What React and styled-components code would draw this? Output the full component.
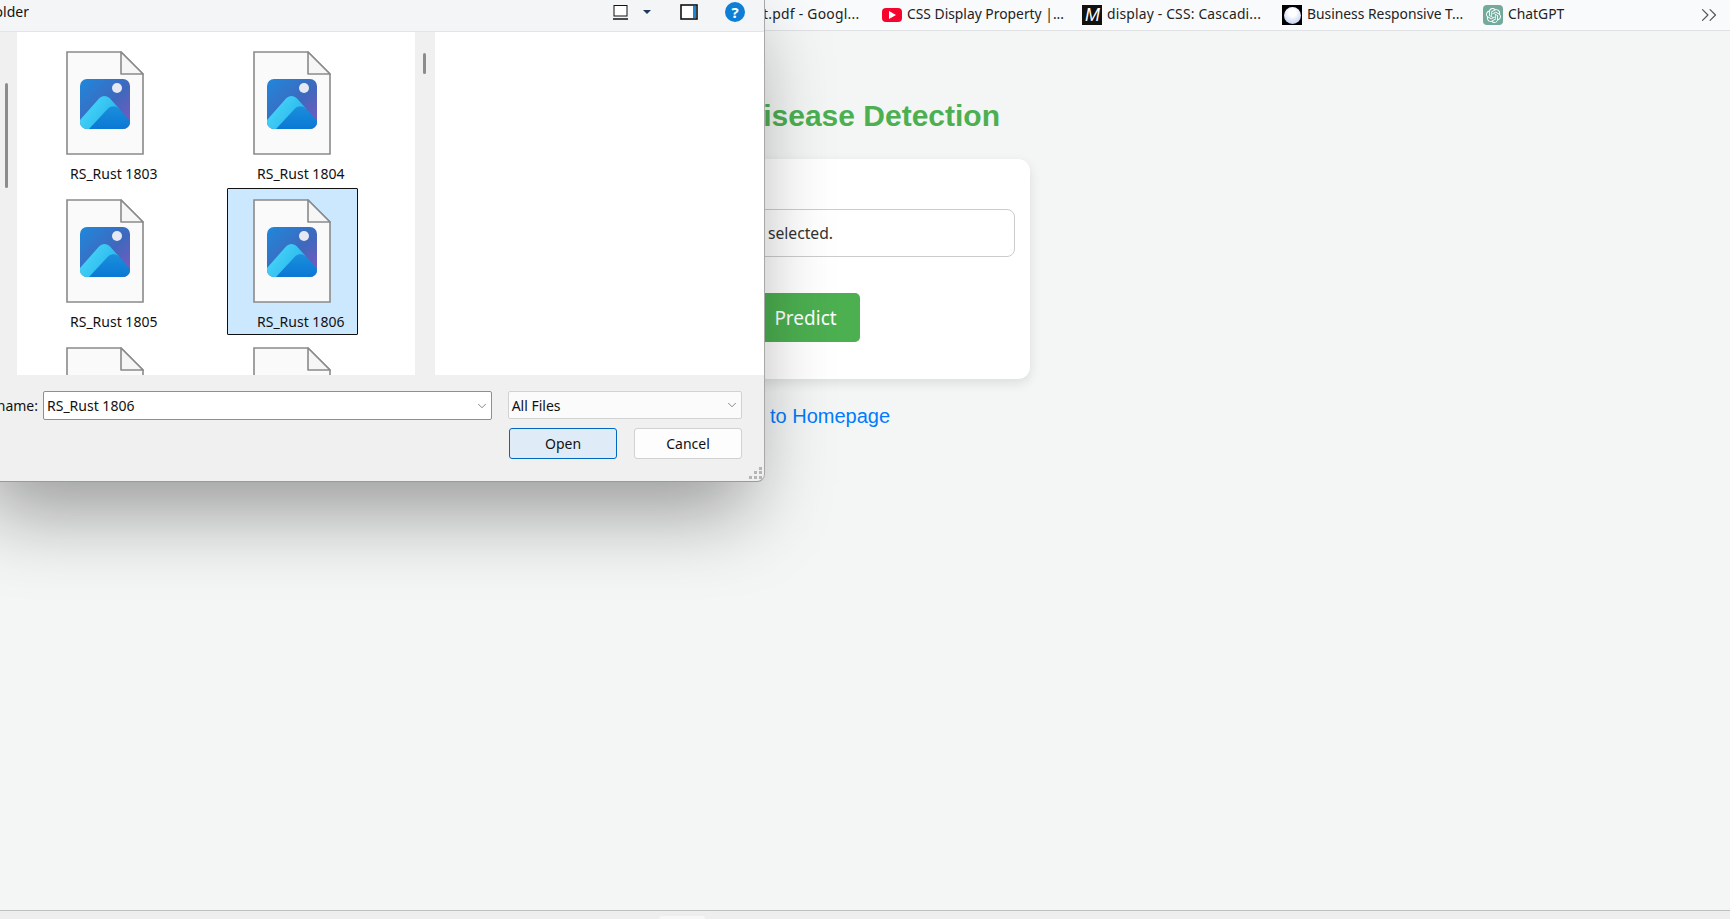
import { useId } from "react";
import styled, { createGlobalStyle } from "styled-components";
import { ChevronDown, ChevronsRight } from "lucide-react";
import { SiOpenai } from "react-icons/si";

const GlobalStyle = createGlobalStyle`
  html, body {
    margin: 0;
    height: 100%;
    overflow: hidden;
    background: #f4f6f5;
  }
  * {
    box-sizing: border-box;
  }
`;

const uiFont = `"Noto Sans", "Open Sans", sans-serif`;
const webFont = `"Liberation Sans", Arial, sans-serif`;

const Screen = styled.div`
  position: relative;
  width: 1730px;
  height: 919px;
  display: flex;
  flex-direction: column;
  overflow: hidden;
`;

/* browser chrome */
const BookmarkBar = styled.div`
  height: 31px;
  flex: none;
  display: flex;
  align-items: center;
  padding-left: 763px;
  border-bottom: 1px solid #dfe1e3;
  background: #f9fafb;
  font: 13.85px ${uiFont};
  color: #222;
`;

const Bookmark = styled.div`
  width: ${(p) => p.$width}px;
  flex: none;
  display: flex;
  align-items: center;
  gap: 5px;
  white-space: nowrap;
`;

const BookmarkText = styled.span`
  padding-bottom: 4px;
  letter-spacing: ${(p) => p.$track || 0}px;
`;

const FaviconBox = styled.span`
  width: 20px;
  height: ${(p) => p.$height || 20}px;
  flex: none;
  display: flex;
  align-items: center;
  justify-content: center;
  border-radius: ${(p) => p.$radius || 0}px;
  background: ${(p) => p.$bg};
  color: #fff;
`;

const MdnLetter = styled.span`
  font: italic 400 18px/1 ${webFont};
  letter-spacing: -1px;
`;

const Moon = styled.span`
  width: 17px;
  height: 17px;
  border-radius: 50%;
  background: radial-gradient(circle at 50% 35%, #ffffff 25%, #aebfee 100%);
`;

const MoreButton = styled.div`
  margin-left: auto;
  margin-right: 8px;
  display: flex;
  color: #555;
`;

/* page under the dialog */
const Main = styled.main`
  flex: 1;
  padding-left: 700px;
`;

const Content = styled.div`
  width: 330px;
  display: flex;
  flex-direction: column;
`;

const Title = styled.h1`
  margin: 67px 30px 0 0;
  align-self: flex-end;
  white-space: nowrap;
  font: 700 30px/36px ${webFont};
  color: #4caf50;
`;

const Card = styled.section`
  height: 220px;
  margin-top: 25px;
  padding: 50px 15px 0;
  border-radius: 12px;
  background: #fff;
  box-shadow: 0 4px 12px rgba(0, 0, 0, 0.1);
`;

const FileField = styled.div`
  height: 48px;
  display: flex;
  align-items: center;
  border: 1px solid #ccc;
  border-radius: 8px;
  font: 15.7px ${uiFont};
  color: #333;
  white-space: nowrap;
`;

const PredictButton = styled.button`
  display: block;
  width: 109px;
  height: 49px;
  margin: 36px 0 0 36px;
  border: 0;
  border-radius: 5px;
  background: #4caf50;
  color: #fff;
  font: 19px ${uiFont};
`;

const BackLink = styled.a`
  margin: 23px 0 0 20px;
  font: 20px/28px ${webFont};
  color: #007bff;
  white-space: nowrap;
`;

const StatusStrip = styled.div`
  height: 9px;
  flex: none;
  display: flex;
  padding: 5px 0 0 659px;
  border-top: 1px solid #bcc0bf;
  background: #eee;
`;

const StripTab = styled.div`
  width: 46px;
  border-radius: 4px 4px 0 0;
  background: #f7f7f7;
`;

/* file dialog window */
const Dialog = styled.div`
  position: absolute;
  top: 0;
  left: 0;
  width: 765px;
  height: 482px;
  display: flex;
  flex-direction: column;
  border-right: 1px solid #a8a8a8;
  border-bottom: 1px solid #9a9a9a;
  border-bottom-right-radius: 8px;
  background: #f0f0f0;
  font: 14px ${uiFont};
  color: #111;
  box-shadow: -15px 30px 80px rgba(0, 0, 0, 0.38);
  overflow: hidden;
`;

const Toolbar = styled.div`
  height: 32px;
  flex: none;
  padding-bottom: 7px;
  display: flex;
  align-items: center;
  border-bottom: 1px solid #e3e4e6;
  background: #f4f5f7;
`;

const ClippedLabel = styled.div`
  width: ${(p) => p.$width}px;
  flex: none;
  display: flex;
  justify-content: flex-end;
  white-space: nowrap;
  overflow: hidden;
  line-height: ${(p) => p.$lineHeight || 20}px;
`;

const ToolIcons = styled.div`
  margin-left: auto;
  padding-right: 19px;
  display: flex;
  align-items: center;
`;

const ToolIcon = styled.svg`
  display: block;
  margin-left: ${(p) => p.$gap}px;
`;

const HelpBadge = styled.div`
  width: 20px;
  height: 20px;
  margin-left: 27px;
  display: flex;
  align-items: center;
  justify-content: center;
  border-radius: 50%;
  background: #0f7fd6;
  color: #fff;
  font: 700 15px/1 ${uiFont};
`;

const Panes = styled.div`
  height: 343px;
  flex: none;
  display: flex;
`;

const NavPane = styled.div`
  width: 17px;
  flex: none;
  padding: 51px 0 0 5px;
`;

const ScrollThumb = styled.div`
  width: ${(p) => p.$width}px;
  height: ${(p) => p.$height}px;
  border-radius: 2px;
  background: #8c8c8c;
`;

const FilePane = styled.div`
  width: 398px;
  flex: none;
  padding: 8px 0 0 23px;
  display: grid;
  grid-template-columns: repeat(2, 131px);
  grid-auto-rows: 147px;
  column-gap: 56px;
  row-gap: 1px;
  align-content: start;
  background: #fff;
  overflow: hidden;
`;

const FileCell = styled.div`
  padding: 10px 0 0 25px;
  border: 1px solid ${(p) => (p.$selected ? "#111" : "transparent")};
  border-radius: 1px;
  background: ${(p) => (p.$selected ? "#cce8ff" : "transparent")};
`;

const FileName = styled.div`
  margin: 9px 0 0 4px;
  line-height: 20px;
  white-space: nowrap;
`;

const PaneScroll = styled.div`
  width: 20px;
  flex: none;
  padding: 21px 0 0 8px;
`;

const PreviewPane = styled.div`
  flex: 1;
  background: #fff;
`;

const Footer = styled.div`
  flex: 1;
  position: relative;
  padding: 16px 22px 0 0;
  display: flex;
  flex-direction: column;
  gap: 8px;
`;

const FooterRow = styled.div`
  display: flex;
  align-items: flex-start;
`;

const ComboBox = styled.div`
  width: ${(p) => p.$width}px;
  height: ${(p) => p.$height}px;
  margin-left: ${(p) => p.$gap || 0}px;
  padding: 0 2px 0 3px;
  display: flex;
  align-items: center;
  justify-content: space-between;
  border: 1px solid ${(p) => p.$border};
  border-radius: 2px;
  background: ${(p) => p.$bg};
`;

const ButtonRow = styled.div`
  display: flex;
  justify-content: flex-end;
  gap: 17px;
`;

const DialogButton = styled.button`
  width: 108px;
  height: 31px;
  padding: 0;
  border: 1px solid ${(p) => (p.$primary ? "#0067c0" : "#d1d1d1")};
  border-radius: 3px;
  background: ${(p) => (p.$primary ? "#dfecf8" : "#fdfdfd")};
  font: 14px ${uiFont};
  color: #111;
`;

const ResizeGrip = styled.svg`
  position: absolute;
  right: 1px;
  bottom: 1px;
`;

const ImageFileIcon = () => {
  const id = useId();
  return (
    <svg width="78" height="104" viewBox="0 0 78 104" style={{ display: "block" }}>
      <defs>
        <linearGradient id={`${id}sky`} x1="0" y1="0" x2="1" y2="1">
          <stop offset="0" stopColor="#1f88dc" />
          <stop offset="0.55" stopColor="#3f68bd" />
          <stop offset="1" stopColor="#8058bf" />
        </linearGradient>
        <linearGradient id={`${id}near`} x1="0" y1="0" x2="1" y2="0.6">
          <stop offset="0" stopColor="#4fdcfb" />
          <stop offset="1" stopColor="#26b4ec" />
        </linearGradient>
        <linearGradient id={`${id}far`} x1="0" y1="0" x2="0" y2="1">
          <stop offset="0" stopColor="#1a8fdc" />
          <stop offset="1" stopColor="#0a78d4" />
        </linearGradient>
        <clipPath id={`${id}tile`}>
          <rect x="14" y="28" width="50" height="50" rx="7" />
        </clipPath>
      </defs>
      <path d="M1 1H55L77 23V103H1Z" fill="#fafafa" stroke="#8a8a8a" strokeWidth="1.6" />
      <path d="M55 1L77 23H55Z" fill="#f6f6f6" stroke="#8a8a8a" strokeWidth="1.6" strokeLinejoin="round" />
      <rect x="14" y="28" width="50" height="50" rx="7" fill={`url(#${id}sky)`} />
      <g clipPath={`url(#${id}tile)`}>
        <circle cx="51" cy="37" r="5" fill="#e6e8f2" />
        <path d="M14 69L33 47.5C36 44 41 44 44 47.5L53 57.5L40 78H14Z" fill={`url(#${id}near)`} />
        <path d="M23 78L42 57.5C45 54.5 50 54.5 53 57.5L64 70V78Z" fill={`url(#${id}far)`} />
      </g>
    </svg>
  );
};

const files = [
  { id: 1803, name: "RS_Rust 1803" },
  { id: 1804, name: "RS_Rust 1804" },
  { id: 1805, name: "RS_Rust 1805" },
  { id: 1806, name: "RS_Rust 1806", selected: true },
  { id: 1807 },
  { id: 1808 },
];

const GripDots = () => (
  <ResizeGrip width="14" height="14" viewBox="0 0 14 14" fill="#b5b5b5">
    <rect x="10" y="1" width="3" height="3" />
    <rect x="5" y="5" width="3" height="3" />
    <rect x="10" y="5" width="3" height="3" />
    <rect x="0" y="10" width="3" height="3" />
    <rect x="5" y="10" width="3" height="3" />
    <rect x="10" y="10" width="3" height="3" />
  </ResizeGrip>
);

export default function App() {
  return (
    <Screen>
      <GlobalStyle />
      <BookmarkBar>
        <Bookmark $width={119}>
          <BookmarkText $track={0.27}>t.pdf - Googl...</BookmarkText>
        </Bookmark>
        <Bookmark $width={200}>
          <FaviconBox $bg="#f5052d" $height={14} $radius={4}>
            <svg width="8" height="8" viewBox="0 0 8 8">
              <path d="M1 0L8 4L1 8Z" fill="#fff" />
            </svg>
          </FaviconBox>
          <BookmarkText>CSS Display Property |...</BookmarkText>
        </Bookmark>
        <Bookmark $width={200}>
          <FaviconBox $bg="#111">
            <MdnLetter>M</MdnLetter>
          </FaviconBox>
          <BookmarkText $track={0.19}>display - CSS: Cascadi...</BookmarkText>
        </Bookmark>
        <Bookmark $width={201}>
          <FaviconBox $bg="#000">
            <Moon />
          </FaviconBox>
          <BookmarkText>Business Responsive T...</BookmarkText>
        </Bookmark>
        <Bookmark $width={90}>
          <FaviconBox $bg="#74aa9c" $radius={4}>
            <SiOpenai size={15} />
          </FaviconBox>
          <BookmarkText>ChatGPT</BookmarkText>
        </Bookmark>
        <MoreButton>
          <ChevronsRight size={26} strokeWidth={1.1} />
        </MoreButton>
      </BookmarkBar>

      <Main>
        <Content>
          <Title>Plant Disease Detection</Title>
          <Card>
            <FileField>No file selected.</FileField>
            <PredictButton>Predict</PredictButton>
          </Card>
          <BackLink>Back to Homepage</BackLink>
        </Content>
      </Main>

      <StatusStrip>
        <StripTab />
      </StatusStrip>

      <Dialog>
        <Toolbar>
          <ClippedLabel $width={29}>New folder</ClippedLabel>
          <ToolIcons>
            <ToolIcon width="15" height="15" viewBox="0 0 15 15" fill="none" stroke="#111">
              <rect x="1" y="0.5" width="13" height="10.5" fill="#fff" />
              <path d="M0 14H15" strokeWidth="1.5" />
            </ToolIcon>
            <ToolIcon $gap={15} width="8" height="4" viewBox="0 0 8 4">
              <path d="M0 0H8L4 4Z" fill="#1f3a5f" />
            </ToolIcon>
            <ToolIcon $gap={29} width="18" height="16" viewBox="0 0 18 16">
              <rect x="1" y="1" width="16" height="14" fill="#fff" stroke="#111" strokeWidth="1.6" />
              <rect x="13" y="2" width="3" height="12" fill="#1a86d8" />
            </ToolIcon>
            <HelpBadge>?</HelpBadge>
          </ToolIcons>
        </Toolbar>

        <Panes>
          <NavPane>
            <ScrollThumb $width={3} $height={105} />
          </NavPane>
          <FilePane>
            {files.map((file) => (
              <FileCell key={file.id} $selected={file.selected}>
                <ImageFileIcon />
                {file.name && <FileName>{file.name}</FileName>}
              </FileCell>
            ))}
          </FilePane>
          <PaneScroll>
            <ScrollThumb $width={3} $height={21} />
          </PaneScroll>
          <PreviewPane />
        </Panes>

        <Footer>
          <FooterRow>
            <ClippedLabel $width={38} $lineHeight={29}>File name:</ClippedLabel>
            <ComboBox $gap={5} $width={450} $height={29} $border="#8f8f8f" $bg="#fff">
              RS_Rust 1806
              <ChevronDown size={14} strokeWidth={1.2} color="#555" />
            </ComboBox>
            <ComboBox $gap={16} $width={235} $height={28} $border="#d2d2d2" $bg="#fbfbfb">
              All Files
              <ChevronDown size={14} strokeWidth={1.2} color="#555" />
            </ComboBox>
          </FooterRow>
          <ButtonRow>
            <DialogButton $primary>Open</DialogButton>
            <DialogButton>Cancel</DialogButton>
          </ButtonRow>
          <GripDots />
        </Footer>
      </Dialog>
    </Screen>
  );
}
